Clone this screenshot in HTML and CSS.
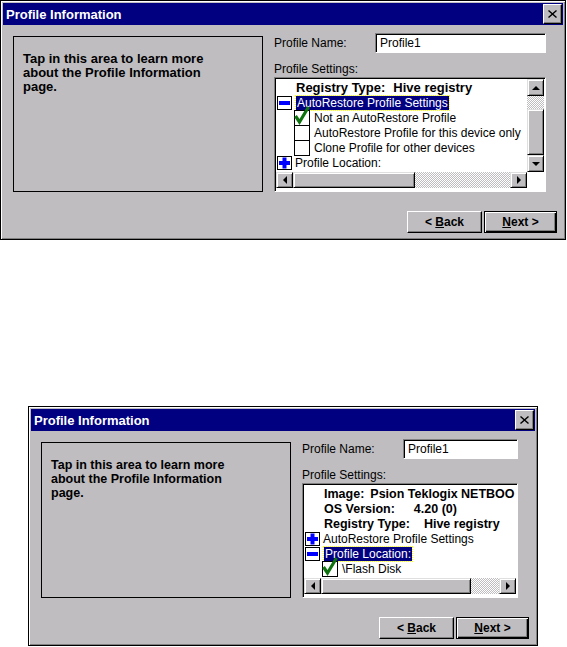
FILE: index.html
```html
<!DOCTYPE html>
<html>
<head>
    <meta charset="UTF-8">
    <title>Profile Information</title>
    <link rel="stylesheet" href="styles.css">
</head>
<body>
    <!-- First screen: AutoRestore branch expanded -->
    <div class="dialog dialog-wide">
        <div class="titlebar">
            <span class="title">Profile Information</span>
            <span class="close"><svg width="9" height="8" viewBox="0 0 9 8"><path d="M0.5 0.5 L8.5 7.5 M8.5 0.5 L0.5 7.5" stroke="#000" stroke-width="1.4" fill="none"/></svg></span>
        </div>
        <div class="dlg-body">
            <div class="help">
                <p>Tap in this area to learn more<br>about the Profile Information<br>page.</p>
            </div>
            <div class="fields">
                <div class="name-row">
                    <label>Profile Name:</label>
                    <div class="input">Profile1</div>
                </div>
                <div class="settings-label">Profile Settings:</div>
                <div class="tree">
                    <div class="tree-rows">
                        <div class="row info"><span class="pad"></span>Registry Type:<span class="val gap-s">Hive registry</span></div>
                        <div class="row"><span class="exp"><svg width="15" height="14" viewBox="0 0 15 14"><rect x="0.5" y="0.5" width="14" height="13" fill="#fff" stroke="#000"/><rect x="2" y="5" width="11" height="4" fill="#0000ff"/></svg></span><span class="sel">AutoRestore Profile Settings</span></div>
                        <div class="row"><span class="ind"></span><span class="chk"><svg width="16" height="15" viewBox="0 0 16 15"><rect x="0.5" y="0.5" width="15" height="15" fill="#fff" stroke="#000"/><path d="M1.5 6 L5.5 12 L14.5 -3" stroke="#0e720e" stroke-width="3.2" fill="none"/></svg></span>Not an AutoRestore Profile</div>
                        <div class="row"><span class="ind"></span><span class="chk"><svg width="16" height="15" viewBox="0 0 16 15"><rect x="0.5" y="0.5" width="15" height="15" fill="#fff" stroke="#000"/></svg></span>AutoRestore Profile for this device only</div>
                        <div class="row"><span class="ind"></span><span class="chk"><svg width="16" height="15" viewBox="0 0 16 15"><rect x="0.5" y="0.5" width="15" height="15" fill="#fff" stroke="#000"/></svg></span>Clone Profile for other devices</div>
                        <div class="row"><span class="exp"><svg width="15" height="14" viewBox="0 0 15 14"><rect x="0.5" y="0.5" width="14" height="13" fill="#fff" stroke="#000"/><rect x="2" y="5" width="11" height="4" fill="#0000ff"/><rect x="5.5" y="1.5" width="4" height="11" fill="#0000ff"/></svg></span>Profile Location:</div>
                    </div>
                    <div class="vscroll">
                        <div class="sb-btn"><span class="arr-up"></span></div>
                        <div class="dither track-top"></div>
                        <div class="thumb thumb-v"></div>
                        <div class="sb-btn"><span class="arr-down"></span></div>
                    </div>
                    <div class="hscroll">
                        <div class="sb-btn"><span class="arr-left"></span></div>
                        <div class="thumb thumb-wide"></div>
                        <div class="dither grow"></div>
                        <div class="sb-btn"><span class="arr-right"></span></div>
                    </div>
                    <div class="corner"></div>
                </div>
            </div>
        </div>
        <div class="buttons">
            <button class="btn btn-back">&lt; <u>B</u>ack</button>
            <button class="btn btn-next"><u>N</u>ext &gt;</button>
        </div>
    </div>

    <!-- Second screen: Profile Location expanded -->
    <div class="dialog dialog-narrow">
        <div class="titlebar">
            <span class="title">Profile Information</span>
            <span class="close"><svg width="9" height="8" viewBox="0 0 9 8"><path d="M0.5 0.5 L8.5 7.5 M8.5 0.5 L0.5 7.5" stroke="#000" stroke-width="1.4" fill="none"/></svg></span>
        </div>
        <div class="dlg-body">
            <div class="help">
                <p>Tap in this area to learn more<br>about the Profile Information<br>page.</p>
            </div>
            <div class="fields">
                <div class="name-row">
                    <label>Profile Name:</label>
                    <div class="input">Profile1</div>
                </div>
                <div class="settings-label">Profile Settings:</div>
                <div class="tree tree-novs">
                    <div class="tree-rows">
                        <div class="row info"><span class="pad"></span>Image:<span class="val gap-xs">Psion Teklogix NETBOO</span></div>
                        <div class="row info"><span class="pad"></span>OS Version:<span class="val gap-l">4.20 (0)</span></div>
                        <div class="row info"><span class="pad"></span>Registry Type:<span class="val gap-m">Hive registry</span></div>
                        <div class="row"><span class="exp"><svg width="15" height="14" viewBox="0 0 15 14"><rect x="0.5" y="0.5" width="14" height="13" fill="#fff" stroke="#000"/><rect x="2" y="5" width="11" height="4" fill="#0000ff"/><rect x="5.5" y="1.5" width="4" height="11" fill="#0000ff"/></svg></span>AutoRestore Profile Settings</div>
                        <div class="row"><span class="exp"><svg width="15" height="14" viewBox="0 0 15 14"><rect x="0.5" y="0.5" width="14" height="13" fill="#fff" stroke="#000"/><rect x="2" y="5" width="11" height="4" fill="#0000ff"/></svg></span><span class="sel">Profile Location:</span></div>
                        <div class="row"><span class="ind"></span><span class="chk"><svg width="16" height="15" viewBox="0 0 16 15"><rect x="0.5" y="0.5" width="15" height="15" fill="#fff" stroke="#000"/><path d="M1.5 6 L5.5 12 L14.5 -3" stroke="#0e720e" stroke-width="3.2" fill="none"/></svg></span>\Flash Disk</div>
                    </div>
                    <div class="hscroll">
                        <div class="sb-btn"><span class="arr-left"></span></div>
                        <div class="thumb thumb-narrow"></div>
                        <div class="dither grow"></div>
                        <div class="sb-btn"><span class="arr-right"></span></div>
                    </div>
                </div>
            </div>
        </div>
        <div class="buttons">
            <button class="btn btn-back">&lt; <u>B</u>ack</button>
            <button class="btn btn-next"><u>N</u>ext &gt;</button>
        </div>
    </div>
</body>
</html>
```

FILE: styles.css
```css
* {
    box-sizing: border-box;
}
body {
    margin: 0;
    background: #fff;
    font-family: "Liberation Sans", Arial, sans-serif;
    font-size: 12px;
    color: #000;
}
.dialog {
    display: flex;
    flex-direction: column;
    height: 240px;
    background: #bfbdc0;
    border: 1px solid #000;
    box-shadow: inset 1px 1px #fff, inset -1px -1px #808080;
}
.dialog-wide {
    width: 566px;
}
.dialog-narrow {
    width: 510px;
    margin: 166px 0 0 28px;
}

/* title bar */
.titlebar {
    display: flex;
    align-items: center;
    justify-content: space-between;
    height: 22px;
    margin: 2px 2px 0;
    padding: 0 1px 0 3px;
    background: #000080;
    color: #fff;
}
.title {
    font-weight: bold;
    font-size: 13px;
}
.close {
    display: flex;
    align-items: center;
    justify-content: center;
    width: 19px;
    height: 20px;
    background: #bfbdc0;
    border: 1px solid;
    border-color: #fff #000 #000 #fff;
    box-shadow: inset -1px -1px #808080;
}

/* body */
.dlg-body {
    display: flex;
    padding: 8px 19px 0 12px;
}
.help {
    width: 250px;
    height: 156px;
    margin-top: 3px;
    border: 1px solid #000;
    padding: 15px 0 0 9px;
    font-weight: bold;
    font-size: 13px;
    line-height: 14px;
}
.dialog-narrow .help {
    font-size: 12.5px;
}
.help p {
    margin: 0;
}
.fields {
    flex: 1;
    margin-left: 11px;
}
.name-row {
    display: flex;
    align-items: center;
    height: 20px;
}
.name-row label {
    width: 101px;
}
.input {
    flex: 1;
    height: 20px;
    padding: 0 4px;
    line-height: 18px;
    background: #fff;
    border: 1px solid;
    border-color: #808080 #fff #fff #808080;
    box-shadow: inset 1px 1px #000;
}
.settings-label {
    height: 16px;
    margin-top: 8px;
    line-height: 16px;
}

/* tree view */
.tree {
    display: grid;
    grid-template-columns: 1fr 17px;
    grid-template-rows: 1fr 16px;
    height: 115px;
    padding: 1px 1px 3px 1px;
    background: #fff;
    border: 1px solid;
    border-color: #808080 #fff #fff #808080;
    box-shadow: inset 1px 1px #000;
}
.tree-novs {
    grid-template-columns: 1fr;
}
.tree-rows {
    overflow: hidden;
    padding-top: 1px;
}
.row {
    display: flex;
    align-items: center;
    height: 15px;
    white-space: nowrap;
}
.row svg {
    display: block;
    overflow: visible;
}
.info {
    font-weight: bold;
    font-size: 13px;
}
.dialog-narrow .info {
    font-size: 12.5px;
}
.pad {
    width: 20px;
    flex: none;
}
.val.gap-xs { margin-left: 6px; }
.val.gap-s { margin-left: 8px; }
.val.gap-m { margin-left: 14px; }
.val.gap-l { margin-left: 19px; }
.exp {
    flex: none;
    width: 19px;
    padding-left: 1px;
}
.sel {
    margin-left: 1px;
    padding: 0 1px;
    line-height: 14px;
    background: #000080;
    color: #fff;
    outline: 1px dotted #ffff00;
}
.row .exp + :not(.sel) {
    margin-left: 2px;
}
.ind {
    flex: none;
    width: 18px;
}
.chk {
    flex: none;
    width: 16px;
    margin-right: 4px;
    align-self: flex-start;
}

/* scroll bars */
.vscroll {
    display: flex;
    flex-direction: column;
}
.hscroll {
    display: flex;
}
.corner {
    background: #fff;
}
.sb-btn {
    display: flex;
    align-items: center;
    justify-content: center;
    flex: none;
    width: 17px;
    height: 17px;
    background: #bfbdc0;
    border: 1px solid;
    border-color: #dfdfdf #000 #000 #dfdfdf;
    box-shadow: inset 1px 1px #fff, inset -1px -1px #808080;
}
.hscroll .sb-btn {
    height: 16px;
}
.thumb {
    flex: none;
    background: #bfbdc0;
    border: 1px solid;
    border-color: #dfdfdf #000 #000 #dfdfdf;
    box-shadow: inset 1px 1px #fff, inset -1px -1px #808080;
}
.thumb-v {
    flex: 1;
}
.thumb-wide {
    width: 122px;
}
.thumb-narrow {
    width: 150px;
}
.dither {
    background: repeating-conic-gradient(#fff 0 25%, #bfbdc0 0 50%) 0 0 / 2px 2px;
}
.track-top {
    height: 13px;
}
.grow {
    flex: 1;
}
.arr-up, .arr-down, .arr-left, .arr-right {
    width: 0;
    height: 0;
    border: 4px solid transparent;
}
.arr-up {
    border-top: 0;
    border-bottom-color: #000;
}
.arr-down {
    border-bottom: 0;
    border-top-color: #000;
}
.arr-left {
    border-left: 0;
    border-right-color: #000;
}
.arr-right {
    border-right: 0;
    border-left-color: #000;
}

/* buttons */
.buttons {
    display: flex;
    justify-content: flex-end;
    gap: 2px;
    margin-top: 19px;
    padding-right: 8px;
}
.btn {
    height: 22px;
    padding: 0;
    background: #bfbdc0;
    font-family: "Liberation Sans", Arial, sans-serif;
    font-size: 12px;
    font-weight: bold;
    color: #000;
    border: 1px solid;
    border-color: #fff #000 #000 #fff;
    box-shadow: inset -1px -1px #808080;
}
.btn-back {
    width: 75px;
}
.btn-next {
    width: 73px;
    border: 1px solid #000;
    box-shadow: inset 1px 1px #fff, inset -1px -1px #000, inset -2px -2px #808080;
}
```
